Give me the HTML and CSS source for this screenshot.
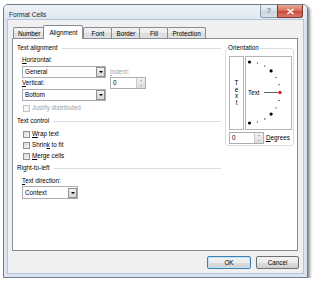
FILE: index.html
```html
<!DOCTYPE html>
<html lang="en">
<head>
    <meta charset="UTF-8">
    <title>Format Cells</title>
    <link rel="stylesheet" href="styles.css">
</head>
<body>
<div class="window">
    <div class="titlebar">
        <span class="title">Format Cells</span>
        <div class="caption">
            <span class="cap-btn help">?</span>
            <span class="cap-btn close">
                <svg width="9" height="7" viewBox="0 0 9 7"><path d="M1.5 1 L7.5 6 M7.5 1 L1.5 6" stroke="#fff" stroke-width="1.6"/></svg>
            </span>
        </div>
    </div>
    <div class="frame-body">
        <div class="client">
            <div class="tabs">
                <span class="tab">Number</span>
                <span class="tab active">Alignment</span>
                <span class="tab">Font</span>
                <span class="tab">Border</span>
                <span class="tab">Fill</span>
                <span class="tab">Protection</span>
            </div>

            <div class="panel">
                <div class="left-col">
                    <!-- Text alignment -->
                    <div class="group-head"><span>Text alignment</span><i class="rule"></i></div>
                    <div class="indent first">
                        <div class="align-row">
                            <div class="align-main">
                                <div class="label"><u>H</u>orizontal:</div>
                                <div class="combo gap-top"><span>General</span><span class="drop"></span></div>
                                <div class="label gap-small"><u>V</u>ertical:</div>
                                <div class="combo gap-top"><span>Bottom</span><span class="drop"></span></div>
                            </div>
                            <div class="indent-box">
                                <div class="label disabled"><u>I</u>ndent:</div>
                                <div class="spinner indent-spin"><span>0</span><span class="spin"><i class="up"></i><i class="down"></i></span></div>
                            </div>
                        </div>
                        <div class="check disabled justify"><span class="box"></span><span>Justify distributed</span></div>
                    </div>

                    <!-- Text control -->
                    <div class="group-head section"><span>Text control</span><i class="rule"></i></div>
                    <div class="indent checks">
                        <div class="check"><span class="box"></span><span><u>W</u>rap text</span></div>
                        <div class="check"><span class="box"></span><span>Shrin<u>k</u> to fit</span></div>
                        <div class="check"><span class="box"></span><span><u>M</u>erge cells</span></div>
                    </div>

                    <!-- Right-to-left -->
                    <div class="group-head rtl"><span>Right-to-left</span><i class="rule"></i></div>
                    <div class="indent first-rtl">
                        <div class="label"><u>T</u>ext direction:</div>
                        <div class="combo short"><span>Context</span><span class="drop"></span></div>
                    </div>
                </div>

                <fieldset class="orient">
                    <legend>Orientation</legend>
                    <div class="orient-row">
                        <div class="vtext"><span>T</span><span>e</span><span>x</span><span>t</span></div>
                        <div class="dial">
                            <svg width="45" height="72" viewBox="0 0 45 72">
                                <g fill="#000">
                                    <circle cx="3.5" cy="5" r="1.6"/>
                                    <circle cx="11.4" cy="6" r="0.6"/>
                                    <circle cx="18.8" cy="9.1" r="0.6"/>
                                    <circle cx="25.1" cy="13.9" r="1.6"/>
                                    <circle cx="29.9" cy="20.3" r="0.6"/>
                                    <circle cx="33" cy="27.6" r="0.6"/>
                                    <circle cx="33" cy="43.4" r="0.6"/>
                                    <circle cx="29.9" cy="50.8" r="0.6"/>
                                    <circle cx="25.1" cy="57.1" r="1.6"/>
                                    <circle cx="18.8" cy="61.9" r="0.6"/>
                                    <circle cx="11.4" cy="65" r="0.6"/>
                                    <circle cx="3.5" cy="66" r="1.6"/>
                                </g>
                                <text x="2" y="37.8" class="dial-text">Text</text>
                                <path d="M18 35.5 H32" stroke="#666" stroke-width="1"/>
                                <circle cx="34" cy="35.5" r="1.7" fill="#e41b1b"/>
                            </svg>
                        </div>
                    </div>
                    <div class="degrees-row">
                        <div class="spinner deg-spin"><span>0</span><span class="spin"><i class="up"></i><i class="down"></i></span></div>
                        <span><u>D</u>egrees</span>
                    </div>
                </fieldset>
            </div>

            <div class="buttons">
                <button class="btn default">OK</button>
                <button class="btn cancel">Cancel</button>
            </div>
        </div>
    </div>
</div>
</body>
</html>
```

FILE: styles.css
```css
* {
    box-sizing: border-box;
}
body {
    margin: 4px 0 0 3px;
    background: #fff;
    font-family: "Liberation Sans", Arial, sans-serif;
    font-size: 6.3px;
    line-height: 8px;
    color: #000;
}
u {
    text-decoration: underline;
}

/* window frame */
.window {
    width: 305px;
    height: 274px;
    border: 1px solid #6f7c8a;
    border-radius: 5px 5px 0 0;
    background: #dbe4ee;
    box-shadow: 2px 2px 3px rgba(0, 0, 0, 0.45);
    display: flex;
    flex-direction: column;
}
.titlebar {
    height: 15px;
    display: flex;
    justify-content: space-between;
    background: linear-gradient(#eef2f7, #dde6f0);
    border-radius: 4px 4px 0 0;
}
.title {
    padding: 6px 0 0 5px;
    font-size: 6.6px;
    color: #1e1e1e;
}
.caption {
    display: flex;
    margin-right: 4px;
}
.cap-btn {
    height: 13px;
    display: flex;
    align-items: center;
    justify-content: center;
}
.help {
    width: 17px;
    border: 1px solid #8d9cad;
    border-top: none;
    border-right: none;
    border-radius: 0 0 0 3px;
    background: linear-gradient(#eef2f6, #d8e1eb 50%, #c9d4e1 51%, #d6dfe9);
    color: #7a8796;
    font-size: 7px;
    font-weight: bold;
}
.close {
    width: 26px;
    border: 1px solid #7d3a33;
    border-top: none;
    border-radius: 0 0 3px 0;
    background: linear-gradient(#eaa99a, #d86a57 50%, #c84a38 52%, #d9786a);
}
.frame-body {
    flex: 1;
    padding: 0 4px 4px;
}
.client {
    height: 100%;
    background: #f0f0f0;
    box-shadow: 0 0 0 1px #b3c5da;
    padding: 5px 0 0 4px;
    display: flex;
    flex-direction: column;
}

/* tabs */
.tabs {
    display: flex;
    align-items: flex-end;
    height: 13px;
    padding-left: 1px;
}
.tab {
    min-width: 29px;
    height: 11px;
    padding: 2px 4px 0;
    text-align: center;
    border: 1px solid #898c95;
    border-bottom: none;
    margin-right: -1px;
    background: linear-gradient(#f3f3f3, #e9e9e9 50%, #dcdcdc 51%, #e2e2e2);
    border-radius: 2px 2px 0 0;
}
.tab.active {
    position: relative;
    z-index: 1;
    height: 14px;
    padding: 3px 5px 0;
    margin: 0 0 -1px -1px;
    background: #fff;
}

/* main panel */
.panel {
    width: 286px;
    height: 213px;
    border: 1px solid #898c95;
    background: #fff;
    display: flex;
    gap: 4px;
    padding: 5px 3px 0 4px;
}
.left-col {
    width: 204px;
}
.group-head {
    display: flex;
    align-items: center;
    height: 8px;
}
.group-head .rule {
    flex: 1;
    height: 1px;
    margin-left: 4px;
    background: #d5dfe5;
}
.group-head.section {
    margin-top: 5px;
}
.group-head.rtl {
    margin-top: 4px;
}
.indent {
    padding-left: 5px;
}
.indent.first {
    margin-top: 4px;
}
.indent.first-rtl {
    margin-top: 5px;
}
.label {
    height: 8px;
}
.label.gap-small {
    margin-top: 1px;
}
.disabled {
    color: #a0a0a0;
}
.align-row {
    display: flex;
    gap: 4px;
}
.align-main {
    width: 84px;
}
.indent-box {
    margin-top: 12px;
}

/* combo box */
.combo {
    display: flex;
    justify-content: space-between;
    align-items: center;
    width: 84px;
    height: 12px;
    border: 1px solid #abadb3;
    background: #fff;
    padding-left: 2px;
}
.combo.gap-top {
    margin-top: 2px;
}
.combo.short {
    width: 56px;
    height: 13px;
    margin-top: 1px;
}
.drop {
    width: 9px;
    height: 10px;
    border: 1px solid #8f8f8f;
    background: linear-gradient(#f5f5f5, #e4e4e4 50%, #d6d6d6 51%, #dedede);
    display: flex;
    align-items: center;
    justify-content: center;
}
.drop::after {
    content: "";
    border-left: 2px solid transparent;
    border-right: 2px solid transparent;
    border-top: 2px solid #000;
}

/* spin boxes */
.spinner {
    display: flex;
    justify-content: space-between;
    height: 12px;
    border: 1px solid #abadb3;
    background: #fff;
    padding-left: 2px;
    line-height: 10px;
}
.indent-spin {
    width: 36px;
    margin-top: 1px;
}
.deg-spin {
    width: 35px;
}
.spin {
    width: 9px;
    display: flex;
    flex-direction: column;
    border-left: 1px solid #c8c8c8;
    background: linear-gradient(#f2f2f2, #dcdcdc);
}
.spin i {
    flex: 1;
    display: flex;
    align-items: center;
    justify-content: center;
}
.spin .up::after {
    content: "";
    border-left: 1.5px solid transparent;
    border-right: 1.5px solid transparent;
    border-bottom: 1.5px solid #7a7a7a;
}
.spin .down::after {
    content: "";
    border-left: 1.5px solid transparent;
    border-right: 1.5px solid transparent;
    border-top: 1.5px solid #7a7a7a;
}

/* check boxes */
.check {
    display: flex;
    align-items: center;
    gap: 2px;
    height: 8px;
}
.check .box {
    width: 7px;
    height: 7px;
    margin-left: 1px;
    border: 1px solid #8e8f8f;
    background: linear-gradient(135deg, #dcdcdc, #f6f6f6);
}
.check.disabled .box {
    border-color: #c4c4c4;
    background: #f4f4f4;
}
.check.justify {
    margin-top: 3px;
}
.checks {
    margin-top: 5px;
    display: flex;
    flex-direction: column;
    gap: 3px;
}

/* orientation */
.orient {
    width: 69px;
    height: 102px;
    margin: 0;
    padding: 4px 1px 1px 3px;
    border: 1px solid #d5dfe5;
    border-radius: 3px;
    align-self: flex-start;
}
.orient legend {
    padding: 0 1px;
    margin-left: -2px;
    line-height: 8px;
}
.orient-row {
    display: flex;
    gap: 1px;
}
.vtext {
    width: 15px;
    height: 74px;
    border: 1px solid #b4b4b4;
    display: flex;
    flex-direction: column;
    align-items: center;
    justify-content: center;
    line-height: 6.5px;
}
.dial {
    width: 47px;
    height: 74px;
    border: 1px solid #b4b4b4;
}
.dial svg {
    display: block;
}
.dial-text {
    font-family: "Liberation Sans", Arial, sans-serif;
    font-size: 6.3px;
    fill: #000;
}
.degrees-row {
    display: flex;
    align-items: center;
    gap: 2px;
    margin-top: 2px;
}

/* dialog buttons */
.buttons {
    display: flex;
    justify-content: flex-end;
    gap: 5px;
    margin-top: 5px;
    padding-right: 4px;
}
.btn {
    height: 13px;
    padding: 0;
    font-family: inherit;
    font-size: 6.3px;
    color: #000;
    border: 1px solid #707070;
    border-radius: 2px;
    background: linear-gradient(#f2f2f2, #ebebeb 50%, #dddddd 51%, #cfcfcf);
}
.btn.default {
    width: 44px;
    border-color: #3c7fb1;
    box-shadow: inset 0 0 0 1px #c4e3f7;
}
.btn.cancel {
    width: 43px;
}
```
